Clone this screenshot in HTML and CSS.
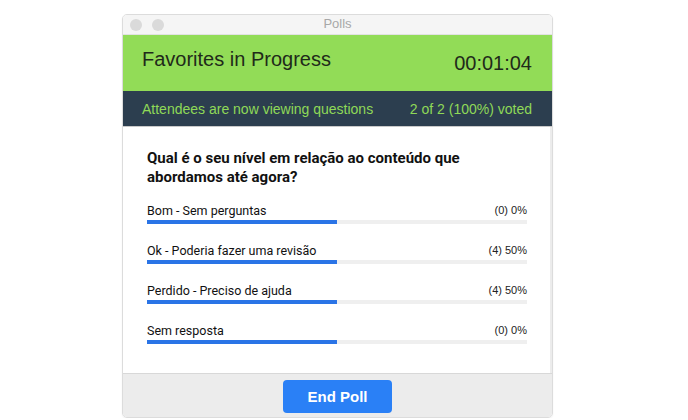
FILE: index.html
```html
<!DOCTYPE html>
<html lang="pt-BR">
<head>
  <meta charset="UTF-8" />
  <title>Polls</title>
  <link rel="stylesheet" href="styles.css">
</head>
<body>
  <div class="window">
    <div class="titlebar">
      <span class="dot"></span>
      <span class="dot"></span>
      <span class="title">Polls</span>
    </div>

    <div class="header">
      <span class="poll-name">Favorites in Progress</span>
      <span class="timer">00:01:04</span>
    </div>

    <div class="status">
      <span>Attendees are now viewing questions</span>
      <span>2 of 2 (100%) voted</span>
    </div>

    <div class="content">
      <div class="question">Qual é o seu nível em relação ao conteúdo que abordamos até agora?</div>

      <div class="option">
        <div class="option-row">
          <span class="option-name">Bom - Sem perguntas</span>
          <span class="option-count">(0) 0%</span>
        </div>
        <div class="track"><div class="fill"></div></div>
      </div>

      <div class="option">
        <div class="option-row">
          <span class="option-name">Ok - Poderia fazer uma revisão</span>
          <span class="option-count">(4) 50%</span>
        </div>
        <div class="track"><div class="fill"></div></div>
      </div>

      <div class="option">
        <div class="option-row">
          <span class="option-name">Perdido - Preciso de ajuda</span>
          <span class="option-count">(4) 50%</span>
        </div>
        <div class="track"><div class="fill"></div></div>
      </div>

      <div class="option">
        <div class="option-row">
          <span class="option-name">Sem resposta</span>
          <span class="option-count">(0) 0%</span>
        </div>
        <div class="track"><div class="fill"></div></div>
      </div>
    </div>

    <div class="footer">
      <button class="end-btn">End Poll</button>
    </div>
  </div>
</body>
</html>
```

FILE: styles.css
```css
* {
  box-sizing: border-box;
}

body {
  margin: 0;
  background: #fff;
  font-family: "Liberation Sans", Arial, sans-serif;
}

.window {
  width: 431px;
  height: 404px;
  margin: 14px 0 0 122px;
  border: 1px solid #dcdcdc;
  border-radius: 5px;
  overflow: hidden;
  display: flex;
  flex-direction: column;
  box-shadow: 0 1px 2px rgba(0, 0, 0, 0.06);
}

.titlebar {
  height: 20px;
  background: #f5f5f5;
  border-bottom: 1px solid #e2e2e2;
  display: flex;
  align-items: center;
  padding-left: 7px;
  gap: 10px;
  position: relative;
}

.dot {
  width: 12px;
  height: 12px;
  border-radius: 50%;
  background: #dadada;
}

.title {
  position: absolute;
  left: 0;
  right: 0;
  text-align: center;
  font-size: 13px;
  color: #a8a8a8;
  top: 1px;
}

.header {
  height: 56px;
  background: #92dc57;
  display: flex;
  justify-content: space-between;
  align-items: center;
  padding: 0 20px 0 19px;
  font-size: 20px;
  color: #1f2a1a;
}

.poll-name {
  margin-top: -7px;
}

.timer {
  margin-top: 0;
}

.status {
  height: 36px;
  background: #2c3e4f;
  color: #8fd957;
  font-size: 14px;
  display: flex;
  justify-content: space-between;
  align-items: center;
  padding: 0 20px 0 19px;
  border-bottom: 1px solid #c9c9c9;
}

.content {
  flex: 1;
  background: #fff;
  padding: 22px 23px 0 24px;
  border-right: 2px solid #ececec;
}

.question {
  font-family: Roboto, "Liberation Sans", sans-serif;
  font-weight: bold;
  font-size: 15px;
  line-height: 19px;
  color: #111;
  margin-bottom: 13px;
  padding-right: 30px;
}

.option {
  margin-bottom: 16px;
}

.option-row {
  display: flex;
  justify-content: space-between;
  align-items: flex-end;
  height: 18px;
}

.option-name {
  font-family: Roboto, "Liberation Sans", sans-serif;
  font-size: 12.5px;
  color: #111;
}

.option-count {
  font-size: 11px;
  color: #222;
  padding-bottom: 2px;
}

.track {
  height: 4px;
  margin-top: 2px;
  background: #efefef;
}

.fill {
  width: 190px;
  height: 4px;
  background: #2a74e6;
}

.footer {
  height: 44px;
  background: #ececec;
  border-top: 1px solid #d8d8d8;
  display: flex;
  justify-content: center;
  align-items: center;
}

.end-btn {
  width: 109px;
  height: 33px;
  border: none;
  border-radius: 4px;
  background: #2a80f6;
  color: #fff;
  font-family: "Liberation Sans", Arial, sans-serif;
  font-weight: bold;
  font-size: 15px;
  margin-top: 1px;
}
```
